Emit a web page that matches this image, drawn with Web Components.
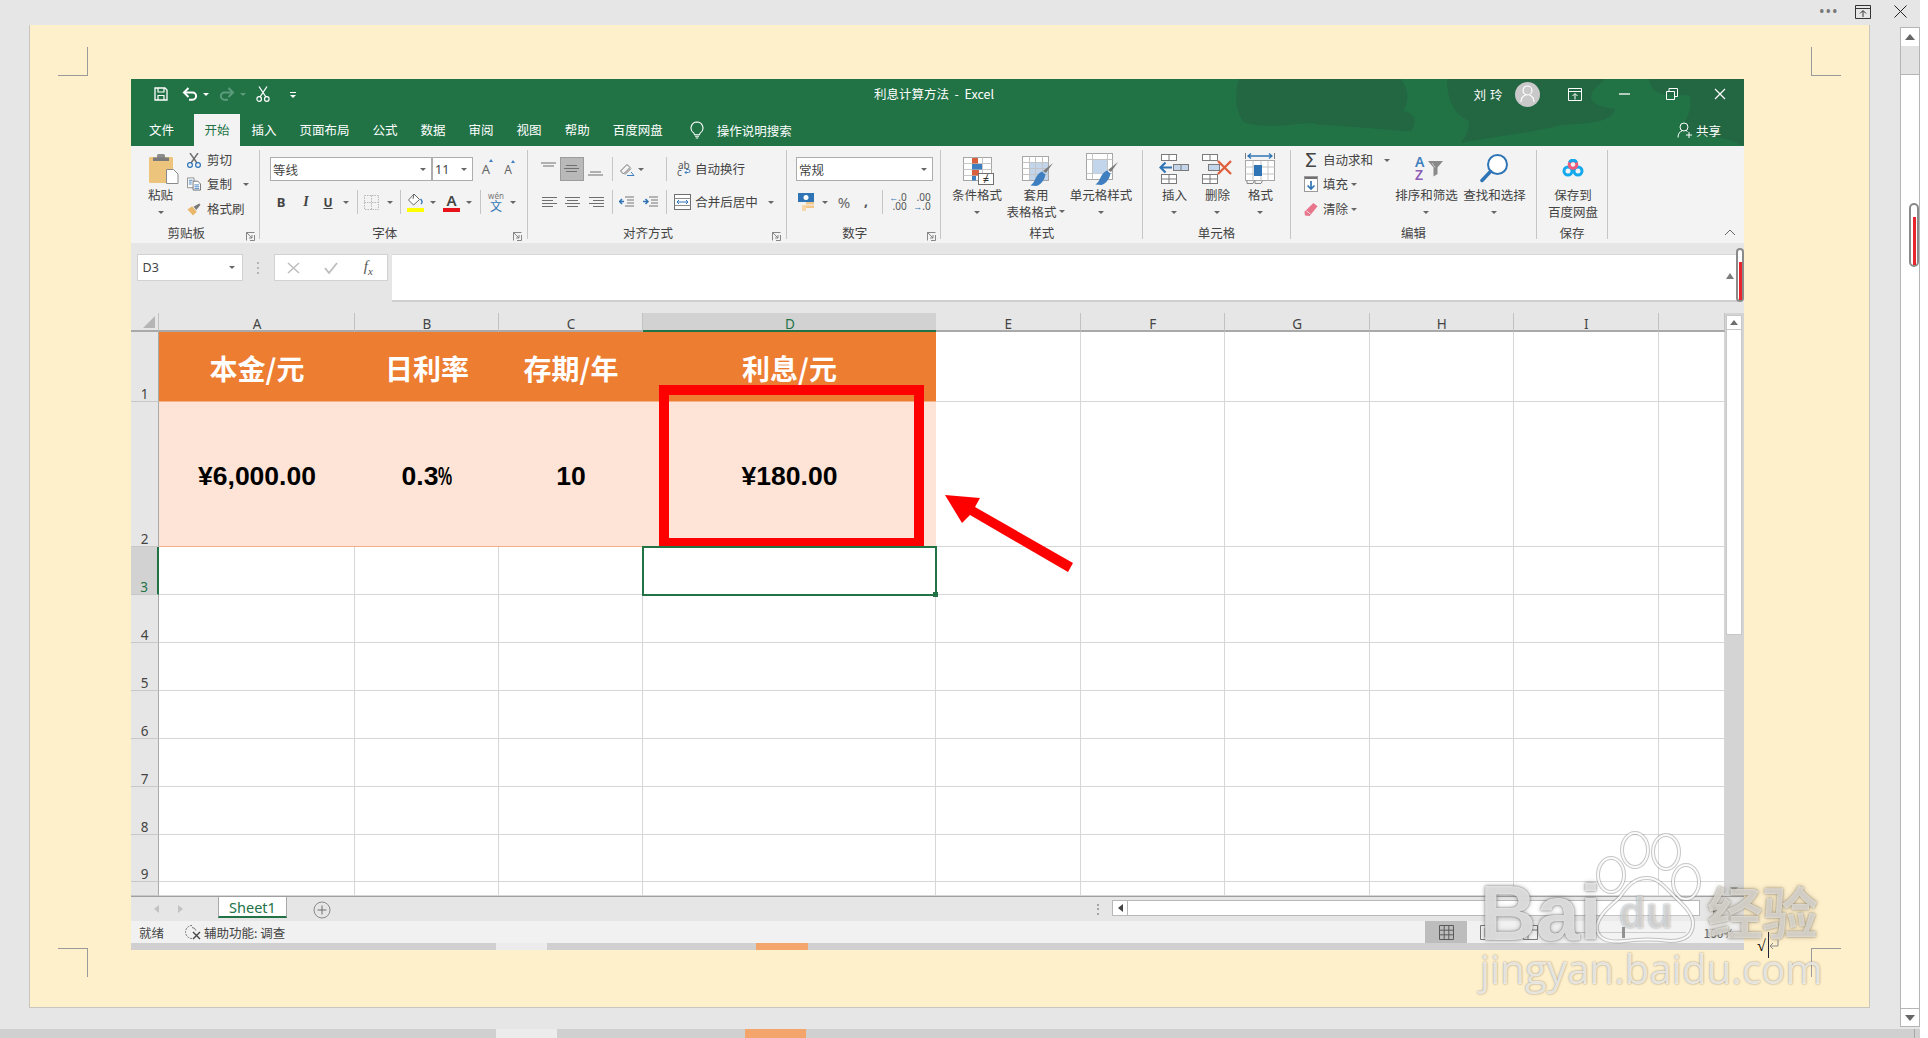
<!DOCTYPE html>
<html lang="zh"><head><meta charset="utf-8"><title>利息计算方法 - Excel</title>
<style>html,body{margin:0;height:100%;overflow:hidden;background:#fff}</style></head>
<body><x-app></x-app>
<script>
const FONT='"Noto Sans CJK SC","Noto Sans",sans-serif';
const C='<b class="c"></b>';
const row=(origin,items,cls='')=>{let p=origin,s='';for(const [x,w,h,st] of items){s+=`<span class="it" style="margin-left:${x-p}px;width:${w}px;${st||''}">${h}</span>`;p=x+w;}return `<div class="r ${cls}">${s}</div>`;};
const sv=(w,h,vb,b)=>`<svg width="${w}" height="${h}" viewBox="${vb}" fill="none">${b}</svg>`;
const lines=(l,dy=0)=>{let b='';[0,1,2,3].forEach(i=>{const [a,z]=l[i]||[];if(a===undefined)return;b+=`<path d="M${a} ${2.5+i*3+dy}H${z}" stroke="#6f6f6f"/>`;});return sv(15,14,'0 0 15 14',b);};
const I={
save:sv(14,14,'0 0 14 14','<path d="M1 1h10l2 2v10H1z" stroke="#fff" stroke-width="1.3"/><path d="M4 1v4h6V1M4 13V8.5h6V13" stroke="#fff" stroke-width="1.2"/>'),
undo:sv(16,14,'0 0 16 14','<path d="M3 5.5h7.5a3.6 3.6 0 0 1 0 7.2H7" stroke="#fff" stroke-width="2"/><path d="M6.5 1 2 5.5 6.5 10" stroke="#fff" stroke-width="2"/>'),
redo:sv(16,14,'0 0 16 14','<path d="M13 5.5H5.5a3.6 3.6 0 0 0 0 7.2H9" stroke="#5c9c7c" stroke-width="2"/><path d="M9.5 1 14 5.5 9.5 10" stroke="#5c9c7c" stroke-width="2"/>'),
cut:sv(14,16,'0 0 14 16','<path d="M3 0.5 10 11M11 .5 4 11" stroke="#fff" stroke-width="1.3"/><circle cx="3.2" cy="13" r="2.3" stroke="#fff" stroke-width="1.2"/><circle cx="10.8" cy="13" r="2.3" stroke="#fff" stroke-width="1.2"/>'),
bulb:sv(14,18,'0 0 14 18','<path d="M7 1a6 6 0 0 0-3.4 10.9c.5.4.8 1 .9 1.8h5c.1-.8.4-1.4.9-1.8A6 6 0 0 0 7 1z" stroke="#fff" stroke-width="1.1"/><path d="M5 15.3h4M5.7 17h2.6" stroke="#fff" stroke-width="1.1"/>'),
paste:sv(30,30,'0 0 30 30','<rect x="0" y="3" width="24" height="26" rx="1" fill="#edc47b"/><rect x="8" y="0" width="8" height="5" rx="1.500" fill="#8c8c8c"/><rect x="4" y="3.500" width="16" height="3.500" fill="#7b7b7b"/><path d="M17.500 15.500h7l4.500 4.500v9.500h-11.500z" fill="#fff" stroke="#8a8a8a"/>'),
scis:sv(14,15,'0 0 14 15','<path d="M3 0 10 10M11 0 4 10" stroke="#6d6d6d" stroke-width="1.400"/><circle cx="3" cy="12" r="2.400" stroke="#2f75b5" stroke-width="1.200"/><circle cx="11" cy="12" r="2.400" stroke="#2f75b5" stroke-width="1.200"/>'),
copy:sv(15,14,'0 0 15 14','<path d="M.5.5h7v10.500h-7z" fill="#fff" stroke="#8a8a8a"/><path d="M2 3h4M2 5h3M2 7h3" stroke="#3f7fbf"/><path d="M6.500 4h5l3 3v6.500h-8z" fill="#fff" stroke="#6f6f6f"/><path d="M8 8h5M8 10h5M8 12h5" stroke="#3f7fbf"/>'),
brush:sv(15,13,'0 0 15 13','<path d="M.5 6.500 5.500 3l5 6-4 4z" fill="#e8b76a"/><path d="M7 3.500 13 0l1.500 1.500L10 7z" fill="#7a7a7a"/>'),
borders:sv(15,15,'0 0 15 15','<path d="M.5.5h14v14H.5zM7.500.5v14M.5 7.500h14" stroke="#b9b9b9" stroke-dasharray="1.500 1"/>'),
fill:sv(17,19,'0 0 17 19','<path d="M7 1 1.500 7l5 5 6-5.500z" fill="#fff" stroke="#666"/><path d="M7 1 6 6" stroke="#666"/><path d="M13.500 6c1.800 1.800 2.200 3.500.5 5" stroke="#3f7fbf" stroke-width="1.500"/><rect y="15" width="17" height="4" fill="#ffff00"/>'),
orient:sv(16,15,'0 0 16 15','<path d="M1.500 9 8 2.500l3 3L4.500 12z" stroke="#6f6f6f"/><path d="M6 12.500 12 6.500" stroke="#6f6f6f"/><path d="M8 13.500 15 13.500 12 10" stroke="#3f7fbf"/>'),
indL:sv(15,14,'0 0 15 14','<path d="M6 2h9M8 5h7M8 8h7M6 11h9" stroke="#777"/><path d="M5 6.500H.5M3 4 .5 6.500 3 9" stroke="#2f75b5" stroke-width="1.500"/>'),
indR:sv(15,14,'0 0 15 14','<path d="M6 2h9M8 5h7M8 8h7M6 11h9" stroke="#777"/><path d="M0 6.500h4.500M2.500 4 5 6.500 2.500 9" stroke="#2f75b5" stroke-width="1.500"/>'),
abwrap:sv(14,14,'0 0 14 14','<path d="M8 10.500h3.500a1.500 1.500 0 0 0 0-3H9" stroke="#3f7fbf"/><path d="M9.500 9 8 10.500 9.500 12" stroke="#3f7fbf"/>'),
merge:sv(17,16,'0 0 17 16','<rect x=".5" y=".5" width="16" height="15" fill="#fff" stroke="#6f6f6f"/><path d="M.5 4.500h16M.5 11.500h16" stroke="#8a8a8a"/><path d="M3 8h11M5 6 3 8l2 2M12 6l2 2-2 2" stroke="#2f75b5"/>'),
money:sv(17,18,'0 0 17 18','<rect x="0" y="0" width="16" height="9" fill="#2f75b5"/><circle cx="8" cy="4.500" r="2.500" fill="#fff"/><rect x="8" y="9" width="8" height="2.500" fill="#f3c78a"/><rect x="8" y="12.500" width="8" height="2.500" fill="#f3c78a"/><rect x="4" y="12" width="4" height="6" fill="#f7d7a8"/>'),
incd:'<span class="dec"><i><u class="ar">←</u>.0</i><i>.00</i></span>',
decd:'<span class="dec"><i>.00</i><i><u class="ar">→</u>.0</i></span>',
cond:sv(31,28,'0 0 31 28','<rect x=".5" y=".5" width="28" height="23" fill="#fff" stroke="#a6a6a6"/><path d="M9.500.5v23M19.500.5v23M.5 6.500h28M.5 12.500h28M.5 18.500h28" stroke="#c8c8c8"/><rect x="9" y="1" width="6" height="5.500" fill="#d9603f"/><rect x="9" y="7" width="10" height="5.500" fill="#3f7fbf"/><rect x="9" y="13" width="7" height="5.500" fill="#d9603f"/><rect x="9" y="19" width="4" height="4.500" fill="#3f7fbf"/><rect x="15.500" y="16.500" width="15" height="11" fill="#fff" stroke="#6f6f6f"/><text x="23" y="25.500" font-size="11" text-anchor="middle" fill="#333" font-family="Noto Sans">≠</text>'),
tablef:sv(31,30,'0 0 31 30','<rect x=".5" y=".5" width="26" height="24" fill="#fff" stroke="#a6a6a6"/><rect x="7" y="7" width="19" height="17" fill="#c2d5ea"/><path d="M7.500.5v24M13.500.5v24M20.500.5v24M.5 6.500h26M.5 12.500h26M.5 18.500h26" stroke="#c4c4c4"/><path d="M31 7 24 17l-3-2z" fill="#7b7b7b"/><path d="M20 15.500l3.500 3c-1 5-4 10-9 11.500l-6-.5c3-2 4-5 5.500-8 1.500-3 3.500-5 6-6z" fill="#3f7fbf"/>'),
cellf:sv(32,33,'0 0 32 33','<rect x=".5" y=".5" width="26" height="26" fill="#fff" stroke="#a6a6a6"/><path d="M.5 6.500h26M.5 20.500h26M6.500.5v26M21.500.5v26" stroke="#c4c4c4"/><rect x="7" y="7" width="14" height="13.500" fill="#c2d5ea"/><path d="M32 9 25 19l-3-2z" fill="#7b7b7b"/><path d="M21 17.500l3.500 3c-1 5-4 10-9 11.500l-6-.5c3-2 4-5 5.500-8 1.500-3 3.500-5 6-6z" fill="#3f7fbf"/>'),
ins:sv(31,30,'0 0 31 30','<rect x="2.500" y=".5" width="15" height="6" fill="#fff" stroke="#7b7b7b"/><path d="M10 .5v6" stroke="#7b7b7b"/><rect x="14.500" y="10.500" width="15" height="6" fill="#c2d5ea" stroke="#7b7b7b"/><path d="M22 10.500v6" stroke="#7b7b7b"/><path d="M13 13.500H2M6.500 8.500l-5 5 5 5" stroke="#2f75b5" stroke-width="2.200"/><rect x="2.500" y="20.500" width="15" height="9" fill="#fff" stroke="#7b7b7b"/><path d="M10 20.500v9M2.500 25h15" stroke="#7b7b7b"/>'),
del:sv(30,30,'0 0 30 30','<rect x=".5" y=".5" width="15" height="6" fill="#fff" stroke="#7b7b7b"/><path d="M8 .5v6" stroke="#7b7b7b"/><rect x="6.500" y="10.500" width="11" height="6" fill="#c2d5ea" stroke="#7b7b7b"/><rect x=".5" y="20.500" width="15" height="9" fill="#fff" stroke="#7b7b7b"/><path d="M8 20.500v9M.5 25h15" stroke="#7b7b7b"/><path d="M16 7l13 13M29 7 16 20" stroke="#e0603c" stroke-width="2.400"/>'),
fmt:sv(30,32,'0 0 30 32','<path d="M3 3h24M6 .5 3 3l3 2.500M24 .5 27 3l-3 2.500" stroke="#2f75b5" stroke-width="1.300"/><path d="M.5 0v6M29.500 0v6" stroke="#7b7b7b"/><rect x=".5" y="7.500" width="29" height="20" fill="#fff" stroke="#a6a6a6"/><path d="M8 7.500v20M16 7.500v20M23 7.500v20M.5 14h29M.5 21h29" stroke="#c4c4c4"/><rect x="9" y="12" width="8" height="11" fill="#2f75b5"/><path d="M2 27.500v3h6l1.500-3M10 27.500v3h6l1.500-3" stroke="#8a8a8a"/>'),
fillb:sv(14,16,'0 0 14 16','<rect x=".5" y=".5" width="13" height="15" fill="#fff" stroke="#9a9a9a"/><rect x="1" y="1" width="12" height="2" fill="#6f6f6f"/><path d="M7 5v8M3.500 9.500 7 13l3.500-3.500" stroke="#2f75b5" stroke-width="1.700"/>'),
clear:sv(15,15,'0 0 15 15','<path d="M10 .5 14.500 4 6 14.500 1 14 .5 10z" fill="#e8758c"/><path d="M2.500 9l4.500 3.500" stroke="#fbe1e6"/>'),
sort:sv(31,28,'0 0 31 28','<path d="M15 6h15l-5.500 6.500v6.500l-4 2.500v-9z" fill="#8a8a8a"/><path d="M19 8l3 4.500" stroke="#c8c8c8"/>'),
find:sv(28,29,'0 0 28 29','<circle cx="17.500" cy="10.500" r="9.500" fill="#fff" stroke="#2f75b5" stroke-width="2"/><path d="M10.500 17.500 2 26.500" stroke="#2f75b5" stroke-width="3.500" stroke-linecap="round"/>'),
baidu:sv(22,18,'0 0 22 18','<circle cx="6" cy="12" r="4" stroke="#14a8ec" stroke-width="3"/><circle cx="16" cy="12" r="4" stroke="#14a8ec" stroke-width="3"/><circle cx="11" cy="5.500" r="3.800" stroke="#ef5b7b" stroke-width="3"/><path d="M7.500 3.500A3.800 3.800 0 0 1 14.500 3.500" stroke="#14a8ec" stroke-width="3"/>'),
launch:sv(9,9,'0 0 9 9','<path d="M.5 8.500V.5h8M.5 .5 6 6M3 6h3V3" stroke="#7b7b7b" stroke-width=".9"/><path d="M8.500 3v5.500H4" stroke="#7b7b7b" stroke-width=".9"/>'),
};
class Base extends HTMLElement{connectedCallback(){if(this.shadowRoot)return;this.attachShadow({mode:'open'}).innerHTML=this.html();}}
const STY=`*,:host{box-sizing:border-box}.r{display:flex;align-items:center}.it{display:flex;align-items:center;justify-content:center;flex:none;white-space:nowrap}.c{display:block;width:0;height:0;border:3px solid transparent;border-bottom:0;border-top:3.500px solid #666}`;

customElements.define('x-group',class extends Base{html(){const l=this.hasAttribute('launch');return `<style>:host{display:flex;flex-direction:column;flex:none;height:89px;margin-top:4px;border-right:1px solid #c6c6c6;box-sizing:border-box;width:${this.getAttribute('w')}px;font:12.500px/16px ${FONT};color:#444}
.body{flex:1;min-height:0}.lab{display:flex;height:16px;margin-bottom:-2px;align-items:center}.t{flex:1;text-align:center}.l{width:${l?18:0}px;display:flex;align-items:center;justify-content:center;height:9px;margin-top:6px}</style><div class="body"><slot></slot></div><div class="lab"><span class="t">${this.getAttribute('label')}</span><span class="l">${l?I.launch:''}</span></div>`;}});

customElements.define('x-large',class extends Base{html(){const lns=(this.getAttribute('t')||'').split('|'),caret=this.getAttribute('caret');let t=lns.map(s=>`<div class="t">${s}${caret==='inline'&&lns.length>1&&s===lns[1]?'<b class="c in"></b>':''}</div>`).join('');if(caret==='row')t+=`<div class="t cw"><b class="c"></b></div>`;return `<style>${STY}:host{display:flex;flex-direction:column;align-items:center;flex:none;width:${this.getAttribute('w')}px;font:12.500px/16px ${FONT};color:#444}
.ic{height:37px;width:100%;display:flex;align-items:flex-start;justify-content:center;padding-top:${this.getAttribute('pt')||3}px;padding-left:${this.getAttribute('pl')||0}px}.t{height:16.500px;white-space:nowrap;display:flex;align-items:center;justify-content:center}.cw{height:17px}.c.in{margin-left:3px}</style><div class="ic"><slot></slot></div>${t}`;}});

customElements.define('x-combo',class extends Base{html(){return `<style>${STY}:host{display:flex;align-items:center;width:100%;height:24px;background:#fff;border:1px solid #adadad;padding:0 ${this.getAttribute('pr')||5}px 0 2px;font:12.500px ${FONT};color:#444}.v{flex:1;font-family:${this.hasAttribute('num')?'"Noto Sans"':FONT}}</style><span class="v">${this.getAttribute('v')}</span><b class="c"></b>`;}});

customElements.define('x-head',class extends Base{html(){
const qat=row(131,[[154,14,I.save],[182,16,I.undo],[203,6,'<b class="c w"></b>'],[219,16,I.redo],[240,6,'<b class="c d"></b>'],[256,14,I.cut],[290,6,'<b class="cz"></b>']]);
const tabs=['文件','开始','插入','页面布局','公式','数据','审阅','视图','帮助','百度网盘'].map((s,i)=>`<span class="tab${i==1?' on':''}">${s}</span>`).join('');
return `<style>${STY}:host{display:block;position:relative;height:67px;background:#217346;font:12.500px ${FONT};color:#fff}
svg.blob{position:absolute;left:0;top:0}.title{position:relative;display:flex;align-items:center;height:35px;padding-bottom:5px}.qat{width:743px;flex:none}.name{flex:none;width:126px;white-space:nowrap;margin-top:-1px}.rt{flex:none}
.c.w{border-top-color:#fff}.c.d{border-top-color:#5c9c7c}.cz{display:block;width:6px;height:5px;border-top:1px solid #fff;position:relative}.cz::after{content:"";position:absolute;left:0;top:2px;border:3px solid transparent;border-top:3px solid #fff;border-bottom:0}
.tabs{position:relative;display:flex;align-items:stretch;height:32px;padding-left:6.500px}.tab{padding:0 11.500px;line-height:31px;white-space:nowrap}.tab.on{background:#f3f3f3;color:#217346;padding:0 10.500px;margin-left:8.500px}
.av{width:25px;height:25px;border-radius:50%;background:#c9c9c9;display:flex;align-items:center;justify-content:center}.tellme{margin-left:16px;display:flex;align-items:center;gap:12.500px}.share{margin-left:auto;margin-right:23px;display:flex;align-items:center;gap:3px}</style>
<svg class="blob" width="1613" height="67" viewBox="0 0 1613 67"><path fill="#236642" d="M1108 0c-6 18-2 36 6 44 34 8 62-4 74 2 26 0 72 6 92 6 8-12 2-18-8-20 8-14 4-22-2-32zM1316 0c0 22 8 36 22 42 0 8-2 14-8 22 30-6 70-10 100-18 28-2 50-2 54-16-30-4-30-14-10-30zM1518 0c2 14 14 18 40 16 4 8 0 22-8 34 14 10 40 4 60 16h3V0z"/></svg>
<div class="title"><div class="qat">${qat}</div><div class="name">利息计算方法&nbsp; - &nbsp;Excel</div>
<div class="rt">${row(1000,[[1475,30,'<span style="letter-spacing:4px">刘玲</span>'],[1515,25,`<span class="av">${sv(15,18,'0 0 15 18','<circle cx="7.500" cy="5.500" r="4.500" stroke="#fff" stroke-width="1.200"/><path d="M1 17c0-4 2-6 4.500-7M14 17c0-4-2-6-4.500-7" stroke="#fff" stroke-width="1.200"/>')}</span>`],[1568,14,sv(14,13,'0 0 14 13','<path d="M.5.500h13v12H.5zM.5 3.500h13M7 11.500V6M4.500 8 7 5.500 9.500 8" stroke="#fff"/>')],[1619,11,sv(11,2,'0 0 11 2','<path d="M0 1h11" stroke="#fff" stroke-width="1.300"/>')],[1666,12,sv(12,12,'0 0 12 12','<path d="M.5 3.500h8v8h-8zM3 3.500V.5h8.500v8H8.500" stroke="#fff"/>')],[1714,12,sv(12,12,'0 0 12 12','<path d="M1 1l10 10M11 1 1 11" stroke="#fff" stroke-width="1.200"/>')]])}</div></div>
<div class="tabs">${tabs}<span class="tellme">${I.bulb}<span>操作说明搜索</span></span><span class="share">${sv(16,16,'0 0 16 16','<circle cx="7" cy="5" r="4" stroke="#fff"/><path d="M1 15.500c0-4 2-6 4-6.500M10.500 9.500 9 8.500M12 10v6M9 13h6" stroke="#fff"/>')}共享</span></div>`;}});

customElements.define('x-ribbon',class extends Base{html(){
const sm=(ic,t,car,mr=6)=>`<div class="sm"><span class="si" style="margin-right:${mr}px">${ic}</span><span>${t}</span>${car||''}</div>`;
const SEL='background:#b9b9b9;box-shadow:inset 0 0 0 1px #9c9c9c;height:24px;';
return `<style>${STY}:host{display:flex;height:97px;background:#f3f3f3;font:12.500px ${FONT};color:#444;position:relative}
.sm{display:flex;align-items:center;white-space:nowrap}.si{display:flex;justify-content:center;width:14px}.lay{display:flex;align-items:flex-start}.col{display:grid;grid-template-rows:22px 26px 24px;margin-top:-1px}
.two{padding-top:7px}.two .r{height:24px}.two .r+.r{margin-top:9px}.sep{width:1px;height:24px;background:#c6c6c6}.bar{display:flex;flex-direction:column;align-items:center;width:17px;font:600 15px/14px "Noto Sans";}.bar i{display:block;width:17px;height:4px;background:#e8121a;margin-top:1px}
.b{font:700 13px "Noto Sans";color:#444}.i{font:italic 700 14px "Liberation Serif";color:#444}.u{font:700 12px "Noto Sans";color:#444;text-decoration:underline}
.pct{font:15px "Noto Sans";color:#666}.comma{font:700 14px "Noto Sans";color:#555;margin-top:-3px}
.dec{display:flex;flex-direction:column;font:10px/9px "Noto Sans";color:#555;align-items:flex-end}.dec i{font-style:normal;display:flex;align-items:center}.ar{text-decoration:none;color:#2f75b5;font-size:9px;font-weight:700}
.gro{font:13px "Noto Sans";color:#666;position:relative}.gro s{position:absolute;left:7px;top:-1px;border:2.500px solid transparent;border-bottom:3px solid #3f7fbf;border-top:0;width:0;height:0}.wen{display:flex;flex-direction:column;align-items:center;font:8px/8px "Noto Sans";color:#777}.wen em{font:12px/12px ${FONT};color:#2f75b5;font-style:normal}
.abw{position:relative;width:14px;height:14px;display:block}.abw span{position:absolute;font:10px/7px "Noto Sans";color:#555}.sigma{font:20px/22px "Noto Sans";color:#444}
.srt{position:relative;display:block;width:31px;height:28px}.srt b{position:absolute;left:2px;font:600 14px/13px "Noto Sans"}.srt svg{position:absolute;left:0;top:0}.chev{position:absolute;right:8px;bottom:3px}</style>
<x-group w="129.400" label="剪贴板" launch><div class="lay" style="padding-left:17px">
<x-large w="25" t="粘贴" caret="row" pt="4"><span style="margin-left:6px;display:block">${I.paste}</span></x-large>
<div class="col" style="margin-left:14px">${sm(I.scis,'剪切')}${sm(I.copy,'复制','<b class="c" style="margin-left:11px"></b>')}${sm(I.brush,'格式刷')}</div></div></x-group>
<x-group w="267.600" label="字体" launch><div class="two">
${row(260.400,[[270,162,'<x-combo v="等线"></x-combo>'],[432,41,'<x-combo v="11" num></x-combo>'],[481,10,'<span class="gro">A<s></s></span>'],[503,10,'<span class="gro" style="font-size:12px">A<s></s></span>']])}
${row(260.400,[[277,8,'<span class="b">B</span>'],[302,8,'<span class="i">I</span>'],[323,10,'<span class="u">U</span>'],[343,6,C],[357,1,'<i class="sep"></i>'],[364,15,I.borders],[387,6,C],[400,1,'<i class="sep"></i>'],[407,17,I.fill],[430,6,C],[443,17,'<span class="bar">A<i></i></span>'],[466,6,C],[480,1,'<i class="sep"></i>'],[489,14,'<span class="wen">wén<em>文</em></span>'],[510,6,C]])}
</div></x-group>
<x-group w="259" label="对齐方式" launch><div class="two">
${row(528,[[541,15,lines([[0,15],[2,13]],-1.500)],[560,24,lines([[2,13],[0,15],[2,13]],1),SEL],[588,15,lines([,,[2,13],[0,15]],1.500)],[612,1,'<i class="sep"></i>'],[619,16,I.orient],[638,6,C],[666,1,'<i class="sep"></i>'],[677,14,'<span class="abw"><span style="left:1px;top:0">ab</span><span style="left:0;top:7px">c</span>'+I.abwrap+'</span>'],[695,50,'自动换行']])}
${row(528,[[542,15,lines([[0,15],[0,11],[0,15],[0,11]])],[565,15,lines([[0,15],[2,13],[0,15],[2,13]])],[589,15,lines([[0,15],[4,15],[0,15],[4,15]])],[612,1,'<i class="sep"></i>'],[619,15,I.indL],[643,15,I.indR],[666,1,'<i class="sep"></i>'],[674,17,I.merge],[695,63,'合并后居中'],[768,6,C]])}
</div></x-group>
<x-group w="154.500" label="数字" launch><div class="two">
${row(787,[[796,137,'<x-combo v="常规"></x-combo>']])}
${row(787,[[798,17,I.money],[822,6,C],[837,14,'<span class="pct">%</span>'],[863,6,'<span class="comma">,</span>'],[882,1,'<i class="sep"></i>'],[891,14,I.incd],[915,14,I.decd]])}
</div></x-group>
<x-group w="201.500" label="样式"><div class="lay" style="padding-left:10.500px">
<x-large w="50" t="条件格式" caret="row" pt="7" pl="3">${I.cond}</x-large><x-large w="60" t="套用|表格格式" caret="inline" pt="6" pl="4" style="margin-left:4px">${I.tablef}</x-large><x-large w="64" t="单元格样式" caret="row" pt="3" pl="3" style="margin-left:3px">${I.cellf}</x-large>
</div></x-group>
<x-group w="148" label="单元格"><div class="lay" style="padding-left:11.500px">
<x-large w="40" t="插入" caret="row" pt="4">${I.ins}</x-large><x-large w="40" t="删除" caret="row" pt="4" style="margin-left:3px">${I.del}</x-large><x-large w="40" t="格式" caret="row" pt="3" style="margin-left:3px">${I.fmt}</x-large>
</div></x-group>
<x-group w="246" label="编辑"><div class="lay" style="padding-left:13px">
<div class="col" style="width:90.500px">${sm('<span class="sigma">Σ</span>','自动求和','<b class="c" style="margin-left:11px"></b>',5)}${sm(I.fillb,'填充','<b class="c" style="margin-left:3px"></b>',5)}${sm(I.clear,'清除','<b class="c" style="margin-left:3px"></b>',5)}</div>
<x-large w="64" t="排序和筛选" caret="row" pt="5" pl="4"><span class="srt">${I.sort}<b style="top:0;color:#3f7fbf">A</b><b style="top:13px;color:#8e5bb5">Z</b></span></x-large><x-large w="64" t="查找和选择" caret="row" pt="4" style="margin-left:4px">${I.find}</x-large>
</div></x-group>
<x-group w="71" label="保存"><div class="lay" style="padding-left:10px">
<x-large w="52" t="保存到|百度网盘" pt="9">${I.baidu}</x-large></div></x-group>
<span class="chev">${sv(12,7,'0 0 12 7','<path d="M1 6l5-5 5 5" stroke="#666"/>')}</span>`;}});

customElements.define('x-formula',class extends Base{html(){return `<style>${STY}:host{display:flex;align-items:flex-start;height:70px;background:#e6e6e6;padding:11px 0 0 5.500px;font:12.500px "Noto Sans";color:#444;position:relative}
.nb{width:106px;height:27px;background:#fff;border:1px solid #d2d2d2;display:flex;align-items:center;justify-content:space-between;padding:0 7px 0 5px}.dots{width:31.500px;height:27px;display:flex;align-items:center;justify-content:center}.dots i{display:block;width:2px;height:12px;background:repeating-linear-gradient(#b5b5b5 0 2px,transparent 2px 5px)}
.fx{width:114px;height:27px;background:#fff;border:1px solid #d2d2d2;display:flex;align-items:center}.fx span{display:flex;justify-content:center;width:38px}.fx em{font:italic 15px "Liberation Serif";color:#555}
.inp{margin-left:3.500px;width:1346.500px;height:48px;background:#fff;border-bottom:2px solid #cfcfcf;border-top:1px solid #d8d8d8;position:relative}.ex{position:absolute;left:1334px;top:11px}</style>
<div class="nb"><span>D3</span>${C}</div><div class="dots"><i></i></div><div class="fx"><span>${sv(13,12,'0 0 13 12','<path d="M1 1l11 10M12 1 1 11" stroke="#bdbdbd" stroke-width="1.500"/>')}</span><span>${sv(14,12,'0 0 14 12','<path d="M1 6l4 5 8-10" stroke="#bdbdbd" stroke-width="1.800"/>')}</span><span><em>f<sub style="font-size:11px">x</sub></em></span></div><div class="inp"><span class="ex">${sv(8,6,'0 0 8 6','<path d="M4 0l4 6H0z" fill="#7b7b7b"/>')}</span></div>`;}});

customElements.define('x-sheet',class extends Base{html(){
const cw=[28,196,144,144,293,144.500,144.500,144.500,144.500,144.500,66.500],rh=[19,70,145,48,48,48,48,48,48,47,14];
let h='<div class="hd corner"><i></i></div>';
['A','B','C','D','E','F','G','H','I',''].forEach(l=>h+=`<div class="hd${l==='D'?' act':''}">${l}</div>`);
const data={1:['本金/元','日利率','存期/年','利息/元'],2:['¥6,000.00','0.3<span class="pc">%</span>','10','¥180.00']};
for(let r=1;r<=10;r++){h+=`<div class="rh${r==3?' act':''}">${r<10?r:''}</div>`;
 for(let c=0;c<10;c++){const k=r==1&&c<4?'o':r==2&&c<4?'p':'',t=data[r]&&data[r][c]||'';h+=`<div class="cl ${k}${r==3&&c==3?' sel':''}">${t}${r==3&&c==3?'<i class="hdl"></i>':''}</div>`;}}
return `<style>*,:host{box-sizing:border-box}:host{display:flex;height:583px;background:#fff;font:14px "Noto Sans";color:#444}
.g{display:grid;grid-template-columns:${cw.join('px ')}px;grid-template-rows:${rh.join('px ')}px;width:1594px;flex:none}
.hd{background:#e6e6e6;display:flex;align-items:center;justify-content:center;border-right:1px solid #c2c2c2;border-bottom:2px solid #a9a9a9;font-size:13.500px;padding:6px 0 0 1px;line-height:1}
.hd.act{background:#d2d2d2;border-bottom:2px solid #217346;color:#217346;border-right:0}.corner{position:relative}.corner i{position:absolute;right:3px;bottom:2px;border:0 solid transparent;border-width:0 0 12px 12px;border-bottom-color:#b5b5b5}
.rh{background:#e6e6e6;display:flex;align-items:flex-end;justify-content:center;border-right:1px solid #a9a9a9;border-bottom:1px solid #c8c8c8;line-height:14px;font-size:13.500px}.rh.act{background:#d2d2d2;color:#217346;border-right:2px solid #217346}
.cl{display:flex;align-items:center;justify-content:center;border-right:1px solid #d6d6d6;border-bottom:1px solid #d6d6d6;position:relative;color:#000;white-space:nowrap}
.o{background:#ed7d31;color:#fff;font:700 28px ${FONT};border-right:0;border-bottom:1px solid #f4b183;padding-top:2px}.p{background:#fde4d6;font:700 26.500px "Liberation Sans",${FONT};border-right:0;border-bottom:1px solid #f4b183;padding-top:5px}
.pc{display:inline-block;width:14px;transform:scaleX(.6);transform-origin:left center}
.sel{outline:2px solid #217346;outline-offset:-1px;z-index:1}.hdl{position:absolute;right:-3px;bottom:-3px;width:5px;height:5px;background:#217346}
.vs{flex:1;display:flex;flex-direction:column;background:#d4d4d4;padding:2px 2px 0 1px}.ub{height:15px;background:#fff;display:flex;align-items:center;justify-content:center;border:1px solid #c8c8c8}.tk{height:305px;background:#fff;border:1px solid #c8c8c8;border-top:0}.db{margin-top:auto;height:14px;display:flex;align-items:center;justify-content:center}</style>
<div class="g">${h}</div><div class="vs"><div class="ub">${sv(8,5,'0 0 8 5','<path d="M4 0l4 5H0z" fill="#6f6f6f"/>')}</div><div class="tk"></div><div class="db">${sv(8,5,'0 0 8 5','<path d="M4 5l4-5H0z" fill="#9a9a9a"/>')}</div></div>`;}});

customElements.define('x-sheetbar',class extends Base{html(){const bx='height:16px;margin-top:3px;background:#fff;border:1px solid #b8b8b8;';return `<style>${STY}:host{display:block;height:25px;background:#e6e6e6;border-top:1px solid #a0a0a0;font:14.500px "Noto Sans";color:#217346}.r{height:24px;align-items:flex-start}</style>
${row(131,[[153,7,sv(5,8,'0 0 5 8','<path d="M5 0 0 4l5 4z" fill="#c2c2c2"/>'),'height:24px'],[177,7,sv(5,8,'0 0 5 8','<path d="M0 0l5 4-5 4z" fill="#c2c2c2"/>'),'height:24px'],[218,69,'<span>Sheet1</span>','height:21px;background:#fff;border:1px solid #a9a9a9;border-top:0;border-bottom:2px solid #217346;'],[313,18,sv(18,18,'0 0 18 18','<circle cx="9" cy="9" r="8" stroke="#8a8a8a"/><path d="M9 4.500v9M4.500 9h9" stroke="#6f6f6f"/>'),'height:24px;padding-top:4px;align-items:flex-start'],[1096,3,'<i style="display:block;width:2px;height:11px;background:repeating-linear-gradient(#a5a5a5 0 2px,transparent 2px 4.500px)"></i>','height:24px'],[1112,16,sv(5,8,'0 0 5 8','<path d="M5 0 0 4l5 4z" fill="#444"/>'),bx],[1128,572,'',bx+'border-left:0'],[1708,15,sv(5,8,'0 0 5 8','<path d="M0 0l5 4-5 4z" fill="#666"/>'),'height:24px']])}`;}});

customElements.define('x-status',class extends Base{html(){return `<style>${STY}:host{display:block;height:22px;background:#f1f1f1;font:12.500px ${FONT};color:#444}.r{height:22px}.lbl{font-size:12px;color:#666}</style>
${row(131,[[139,25,'就绪'],[184,18,sv(18,16,'0 0 18 16','<path d="M8 1.500a6.500 6.500 0 0 0 0 13" stroke="#777" stroke-dasharray="2 1"/><path d="M8 3.500a4.500 4.500 0 0 1 4 3" stroke="#777"/><path d="M9 8l7 7M16 8l-7 7" stroke="#444" stroke-width="1.400"/>')],[204,83,'辅助功能: 调查','justify-content:flex-start'],[1425,42,sv(15,15,'0 0 15 15','<path d="M.5.500h14v14H.5zM5.200.5v14M9.800.5v14M.5 5.200h14M.5 9.800h14" stroke="#5a5a5a"/>'),'height:22px;background:#bdbdbd'],[1480,15,sv(15,15,'0 0 15 15','<path d="M.5.500h14v14H.5zM5 3h5v9H5z" stroke="#777"/>')],[1523,15,sv(15,15,'0 0 15 15','<path d="M.5.500h14v14H.5zM5 5h9.500M5 .5v14" stroke="#777"/>')],[1557,128,'<i style="display:block;flex:1;height:1px;background:#c0c0c0"></i><i style="display:block;width:3px;height:11px;background:#777;margin:0 60px 0 -64px"></i>'],[1703,32,'<span class="lbl">100%</span>']])}`;}});

customElements.define('x-strip',class extends Base{html(){const a=this.getAttribute('a').split(',');return `<style>:host{display:flex;background:#d0d0d0;height:${this.getAttribute('h')}px}i{display:block;flex:none}</style><i style="width:${a[0]}px"></i><i style="width:${a[1]}px;background:#ececec"></i><i style="width:${a[2]}px"></i><i style="width:${a[3]}px;background:#f4a56c"></i>`;}});

customElements.define('x-window',class extends Base{html(){return `<style>:host{display:flex;flex-direction:column;width:1613px;position:relative}</style><x-head></x-head><x-ribbon></x-ribbon><x-formula></x-formula><x-sheet></x-sheet><x-sheetbar></x-sheetbar><x-status></x-status><x-strip h="7" a="364.500,51.500,209,52"></x-strip>`;}});

customElements.define('x-watermark',class extends Base{html(){return `<style>:host{position:absolute;left:1480px;top:825px;width:360px;height:180px;pointer-events:none;color:rgba(255,255,255,.75)}
span{position:absolute;white-space:nowrap}.ba{left:0;top:49px;font:700 78px/78px "Liberation Sans";text-shadow:0 0 2px rgba(90,90,90,.85),0 0 5px rgba(90,90,90,.45)}.du{left:139px;top:66px;font:700 44px/44px "Liberation Sans";color:rgba(255,255,255,.55);text-shadow:0 0 2px rgba(90,90,90,.6)}
.jy{left:227px;top:57px;font:700 56px/56px "Noto Sans CJK SC";letter-spacing:-1px;color:rgba(255,255,255,.62);text-shadow:0 0 2px rgba(110,100,80,.75),0 0 5px rgba(110,100,80,.4)}.url{left:0;top:118px;font:40.300px/52px "Open Sans";color:rgba(255,255,255,.75);text-shadow:0 0 2px rgba(130,120,100,.9)}svg{position:absolute;left:0;top:0}</style>
<svg width="360" height="180" viewBox="0 0 360 180" fill="rgba(255,255,255,.2)"><g stroke="rgba(130,130,130,.45)" stroke-width="4"><ellipse cx="131" cy="50" rx="13" ry="17"/><ellipse cx="155" cy="25" rx="13" ry="17"/><ellipse cx="186" cy="27" rx="13" ry="17"/><ellipse cx="206" cy="57" rx="13" ry="17"/><path d="M117 100C120 88 132 80 140 72 148 60 155 53 167 53 180 53 188 66 197 74 206 82 213 90 213 98 213 110 205 116 190 116 175 114 160 114 145 116 128 118 115 114 117 100z"/></g><g stroke="rgba(255,255,255,.9)" stroke-width="2" fill="none"><ellipse cx="131" cy="50" rx="13" ry="17"/><ellipse cx="155" cy="25" rx="13" ry="17"/><ellipse cx="186" cy="27" rx="13" ry="17"/><ellipse cx="206" cy="57" rx="13" ry="17"/><path d="M117 100C120 88 132 80 140 72 148 60 155 53 167 53 180 53 188 66 197 74 206 82 213 90 213 98 213 110 205 116 190 116 175 114 160 114 145 116 128 118 115 114 117 100z"/></g></svg>
<span class="ba">Bai</span><span class="du">du</span><span class="jy">经验</span><span class="url">jingyan.baidu.com</span>`;}});

customElements.define('x-app',class extends Base{html(){return `<style>*,:host{box-sizing:border-box}:host{display:grid;position:relative;width:1920px;height:1038px;overflow:hidden;background:#e6e6e6;grid-template-columns:29px 1841px 30px 19.500px 1fr;grid-template-rows:25px 983px 21px 9px;font:12.500px ${FONT}}
.top{grid-column:1/-1;grid-row:1;display:flex;justify-content:flex-end;align-items:center;padding:0 13px 2px 0;height:25px}.dots{font:700 12px/12px "Noto Sans";color:#777;letter-spacing:2px;margin-right:16px}.top svg+svg{margin-left:23px}
.page{grid-column:2;grid-row:2;background:#fff0cc;border:1px solid #c9c6bd;border-top:0;padding:54px 0 0 101px}
.vs{grid-column:4;grid-row:1/4;margin-top:27px;margin-bottom:2px;display:flex;flex-direction:column;background:#fff;border:1px solid #b5b5b5}.vs .b{height:18px;display:flex;align-items:center;justify-content:center;background:#fff}.vs .th{height:28px;background:#e2e2e2}.vs .e{flex:1;border-top:1px solid #b5b5b5}.vs .b2{height:18px;display:flex;align-items:center;justify-content:center;border-top:1px solid #b5b5b5}
.bot{grid-column:1/-1;grid-row:4}.dv{position:absolute;left:1914px;top:1029px;width:1px;height:9px;background:#a8a8a8}
.mk{position:absolute;border-color:#9a9a9a;border-style:solid;width:30px;height:29px}
.pill{position:absolute;border:2px solid #8a8a8a;border-radius:5px;background:#fff;display:flex;justify-content:center}.pill i{display:block;width:3px;background:#e8242c;margin-top:auto}
.redbox{position:absolute;left:659px;top:385px;width:265px;height:163px;border:10px solid #ff0000}.arrow{position:absolute;left:0;top:0}
.cur{position:absolute;left:1757px;top:932px;width:24px;height:26px;font:16px/28px "Liberation Serif";color:#000}.cur u{position:absolute;left:11px;top:0;width:1px;height:26px;background:#223}.cur svg{position:absolute;left:11px;top:7px}</style>
<div class="top"><span class="dots">•••</span>${sv(16,14,'0 0 16 14','<path d="M.5.500h15v13H.5zM.5 3.500h15M8 12V6M5 8.500 8 5.500l3 3" stroke="#333" stroke-width="1"/>')}${sv(13,13,'0 0 13 13','<path d="M.5.500l12 12M12.500.5l-12 12" stroke="#222"/>')}</div>
<div class="page"><x-window></x-window></div>
<div class="vs"><div class="b">${sv(10,6,'0 0 10 6','<path d="M5 0l5 6H0z" fill="#666"/>')}</div><div class="th"></div><div class="e"></div><div class="b2">${sv(10,6,'0 0 10 6','<path d="M5 6l5-6H0z" fill="#666"/>')}</div></div>
<x-strip class="bot" h="9" a="495.500,61.500,187.500,61"></x-strip><i class="dv"></i>
<i class="mk" style="left:58px;top:47px;border-width:0 1px 1px 0"></i><i class="mk" style="left:1811px;top:47px;border-width:0 0 1px 1px"></i><i class="mk" style="left:58px;top:948px;border-width:1px 1px 0 0"></i><i class="mk" style="left:1811px;top:948px;border-width:1px 0 0 1px"></i>
<span class="pill" style="left:1909px;top:203px;width:10px;height:64px"><i style="height:48px"></i></span>
<span class="pill" style="left:1736px;top:248px;width:8px;height:54px"><i style="height:38px"></i></span>
<i class="redbox"></i>
<svg class="arrow" width="1920" height="1038" viewBox="0 0 1920 1038"><path fill="#ff0000" d="M945 495 980 498 975 507 1073 563 1068 572 970 515 962 523z"/></svg>
<span class="cur">√<u></u>${sv(12,12,'0 0 12 12','<path d="M10 1v6H2M5 4 2 7l3 3" stroke="#8a8a8a"/>')}</span>
<x-watermark></x-watermark>`;}});
</script></body></html>
